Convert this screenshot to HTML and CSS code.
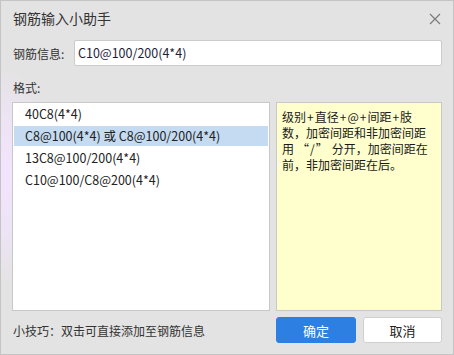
FILE: index.html
```html
<!DOCTYPE html>
<html lang="zh-CN">
<head>
<meta charset="utf-8">
<title>钢筋输入小助手</title>
<link rel="stylesheet" href="styles.css">
</head>
<body>
<div class="dialog">
  <div class="header">
    <span class="title">钢筋输入小助手</span>
    <svg class="close" width="12" height="12" viewBox="0 0 12 12"><path d="M1 1 L11 11 M11 1 L1 11" stroke="#7a7a7a" stroke-width="1.2" fill="none"/></svg>
  </div>
  <div class="field">
    <span class="label">钢筋信息:</span>
    <div class="input">C10@100/200(4*4)</div>
  </div>
  <div class="section-label">格式:</div>
  <div class="panels">
    <ul class="list">
      <li class="item">40C8(4*4)</li>
      <li class="item selected">C8@100(4*4) 或 C8@100/200(4*4)</li>
      <li class="item">13C8@100/200(4*4)</li>
      <li class="item">C10@100/C8@200(4*4)</li>
    </ul>
    <div class="desc">级别<span class="op">+</span>直径<span class="op">+</span>@<span class="op">+</span>间距<span class="op">+</span>肢<br>数，加密间距和非加密间距<br>用<span class="q">“/”</span>分开，加密间距在<br>前，非加密间距在后。</div>
  </div>
  <div class="footer">
    <span class="tip">小技巧：双击可直接添加至钢筋信息</span>
    <div class="buttons">
      <button class="btn primary">确定</button>
      <button class="btn">取消</button>
    </div>
  </div>
</div>
</body>
</html>
```
FILE: styles.css
```css
html, body {
  margin: 0;
  padding: 0;
}
body {
  font-family: "Noto Sans CJK SC", "Noto Sans", sans-serif;
  color: #2a2a2a;
}
.dialog {
  width: 454px;
  height: 355px;
  box-sizing: border-box;
  border: 1px solid #c4c4c4;
  background-color: #e3e3e3;
  background-image: radial-gradient(ellipse 60px 110px at 0px 175px, rgba(243, 228, 255, 1) 0%, rgba(243, 228, 255, 0.6) 55%, rgba(243, 228, 255, 0) 100%);
  padding: 0 11px;
  display: flex;
  flex-direction: column;
}
.header {
  height: 34px;
  display: flex;
  align-items: center;
  justify-content: space-between;
}
.title {
  font-size: 14px;
  line-height: 16px;
  padding-left: 1px;
  color: #333;
}
.close {
  margin-right: 1px;
  margin-top: 2px;
}
.field {
  margin-top: 5px;
  display: flex;
  align-items: center;
  gap: 8px;
}
.label {
  font-size: 12px;
  padding-left: 1px;
  color: #333;
  width: 53px;
}
.input {
  flex: 1;
  height: 26px;
  box-sizing: border-box;
  border: 1px solid #cbcbcb;
  border-radius: 2px;
  background: #fff;
  font-size: 12.5px;
  line-height: 24px;
  padding-left: 3px;
  color: #1e1e3a;
}
.section-label {
  margin-top: 14px;
  font-size: 12px;
  line-height: 16px;
  padding-left: 1px;
  color: #333;
}
.panels {
  margin-top: 6px;
  height: 209px;
  display: flex;
  gap: 6px;
}
.list {
  list-style: none;
  margin: 0;
  padding: 1px;
  width: 258px;
  box-sizing: border-box;
  border: 1px solid #c8c8c8;
  background: #fff;
}
.item {
  height: 20px;
  line-height: 20px;
  margin-bottom: 2px;
  padding-left: 11px;
  font-size: 12.5px;
  color: #222;
}
.item.selected {
  background: #c5dbf1;
}
.desc {
  flex: 1;
  box-sizing: border-box;
  border: 1px solid #c8c8c8;
  background: #ffffcd;
  padding: 6px 5px;
  font-size: 12px;
  line-height: 16px;
  color: #1a1a1a;
  white-space: nowrap;
}
.op {
  margin: 0 1px;
}
.q {
  margin: 0 3px;
  letter-spacing: 1px;
}
.footer {
  margin-top: 6px;
  display: flex;
  align-items: center;
  justify-content: space-between;
}
.tip {
  font-size: 12px;
  color: #333;
  padding-left: 1px;
}
.buttons {
  display: flex;
  gap: 7px;
}
.btn {
  width: 79px;
  height: 26px;
  box-sizing: border-box;
  border: 1px solid #cfcfcf;
  border-radius: 3px;
  background: #fff;
  font-family: inherit;
  font-size: 13px;
  color: #222;
  padding: 0;
}
.btn.primary {
  width: 80px;
  background: #2d7fe1;
  border-color: #2d7fe1;
  color: #fff;
}
```
